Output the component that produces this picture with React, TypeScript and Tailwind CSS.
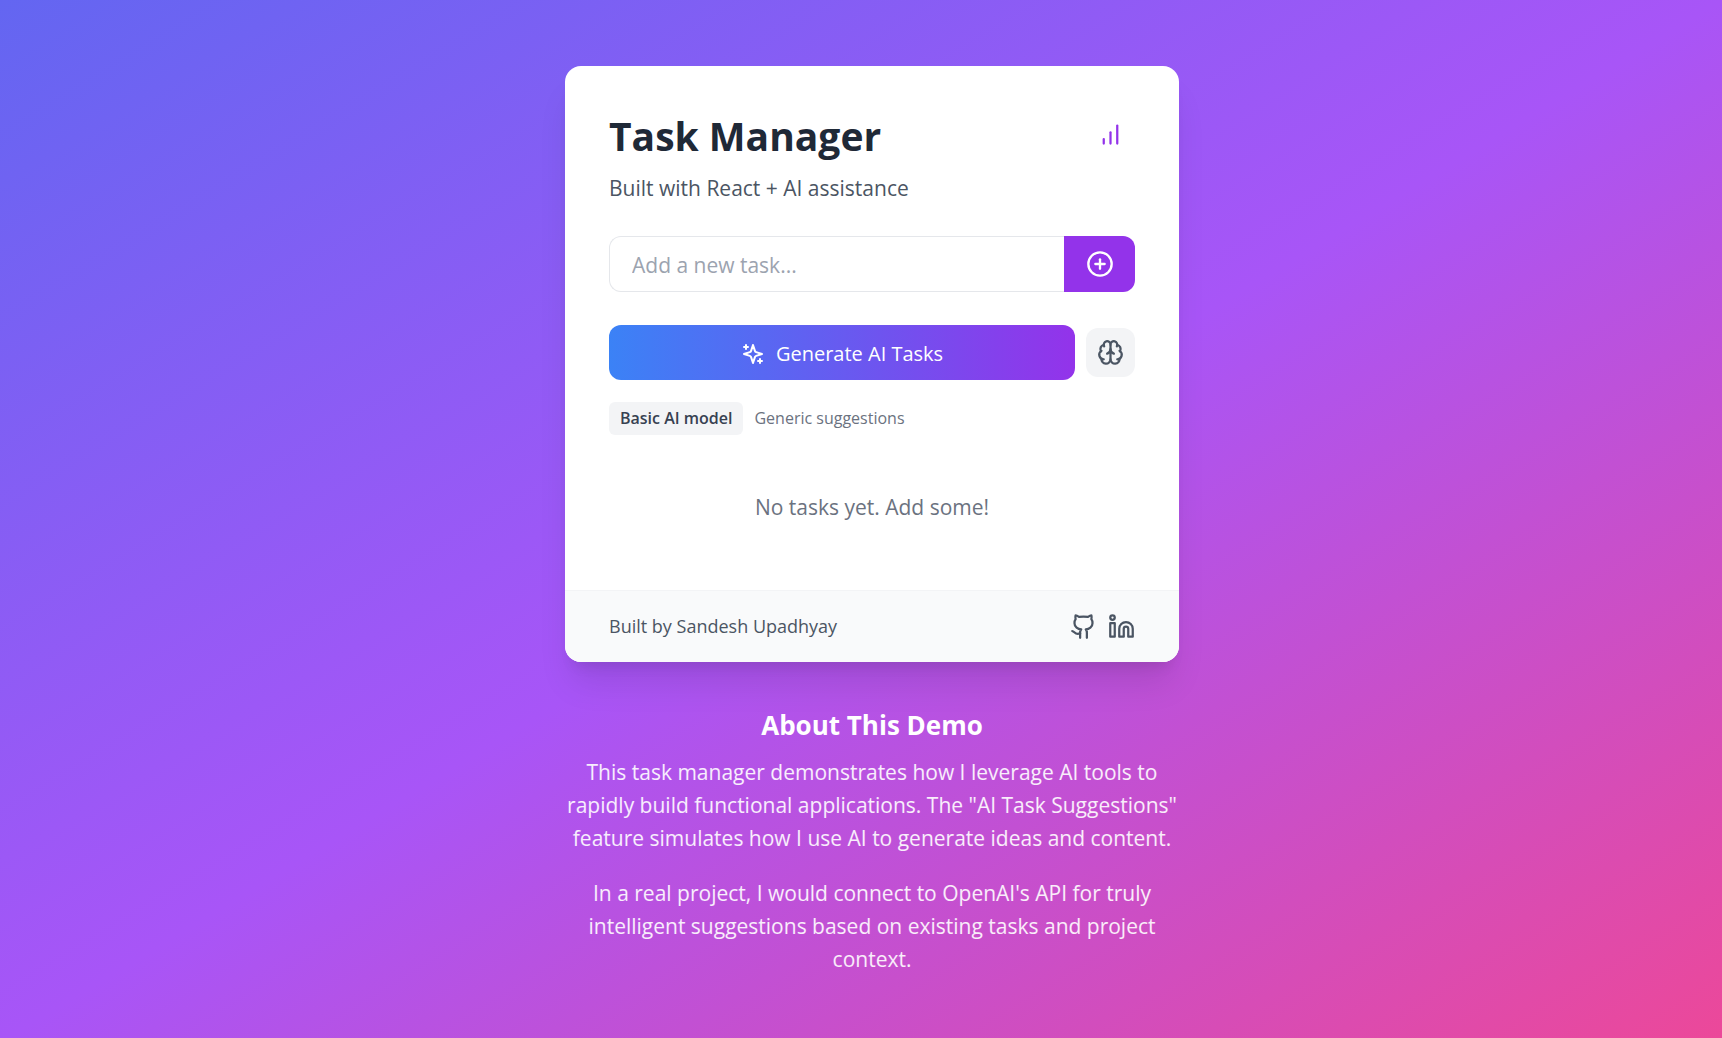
import React, { useState } from "react";
import { Brain, CirclePlus, Github, Linkedin } from "lucide-react";

const strokeProps = {
  viewBox: "0 0 24 24",
  fill: "none",
  stroke: "currentColor",
  strokeWidth: 2,
  strokeLinecap: "round",
  strokeLinejoin: "round",
  "aria-hidden": true,
} as const;

function SparklesIcon() {
  return (
    <svg {...strokeProps} className="size-6">
      <path d="m12 3-1.912 5.813a2 2 0 0 1-1.275 1.275L3 12l5.813 1.912a2 2 0 0 1 1.275 1.275L12 21l1.912-5.813a2 2 0 0 1 1.275-1.275L21 12l-5.813-1.912a2 2 0 0 1-1.275-1.275L12 3Z" />
      <path d="M5 3v4" />
      <path d="M19 17v4" />
      <path d="M3 5h4" />
      <path d="M17 19h4" />
    </svg>
  );
}

function BarsIcon() {
  return (
    <svg {...strokeProps} className="size-[27px]">
      <path d="M12 20V10" />
      <path d="M18 20V4" />
      <path d="M6 20v-4" />
    </svg>
  );
}

export default function App() {
  const [draft, setDraft] = useState("");

  return (
    <div className="min-h-screen bg-[linear-gradient(to_bottom_right,#6366f1,#a855f7,#ec4899)] py-[66px] pr-[22px] pl-11 font-['Open_Sans',sans-serif] text-[21px] leading-[33px]">
      <main className="mx-auto max-w-[614px] overflow-hidden rounded-2xl bg-white shadow-[0_27px_34px_-7px_rgba(0,0,0,0.1),0_11px_14px_-8px_rgba(0,0,0,0.1)]">
        <div className="p-11">
          <header className="mb-[31px] flex items-start justify-between">
            <div>
              <h1 className="mb-[11px] text-[39px] leading-[51px] font-bold text-[#1f2937]">Task Manager</h1>
              <p className="text-[#4b5563]">Built with React + AI assistance</p>
            </div>
            <button type="button" aria-label="Show statistics" className="rounded-full p-[11px] text-[#9333ea]">
              <BarsIcon />
            </button>
          </header>

          <form className="mb-[33px] flex" onSubmit={(e) => e.preventDefault()}>
            <input
              type="text"
              aria-label="New task"
              placeholder="Add a new task..."
              value={draft}
              onChange={(e) => setDraft(e.target.value)}
              className="h-14 min-w-0 flex-1 rounded-l-xl border border-r-0 border-[#e5e7eb] px-[22px] pt-0.5 text-[#1f2937] placeholder:text-[#9ca3af]"
            />
            <button
              type="submit"
              aria-label="Add task"
              className="flex w-[71px] items-center justify-center rounded-r-xl bg-[#9333ea] text-white"
            >
              <CirclePlus className="size-7" />
            </button>
          </form>

          <div className="mb-[22px] flex items-center gap-[11px]">
            <button
              type="button"
              className="flex h-[55px] flex-1 items-center justify-center gap-[11px] rounded-xl bg-[linear-gradient(to_right,#3b82f6,#9333ea)] pt-0.5 text-xl text-white"
            >
              <SparklesIcon />
              Generate AI Tasks
            </button>
            <button
              type="button"
              aria-label="Switch AI model"
              className="rounded-xl bg-[#f3f4f6] p-[11px] text-[#4b5563]"
            >
              <Brain className="size-[27px]" />
            </button>
          </div>

          <div className="flex items-center gap-[11px] text-base leading-[33px]">
            <span className="rounded-md bg-[#f3f4f6] px-[11px] font-semibold text-[#374151]">Basic AI model</span>
            <span className="text-[#6b7280]">Generic suggestions</span>
          </div>

          <p className="pt-14 pb-[22px] text-center text-[#6b7280]">No tasks yet. Add some!</p>
        </div>

        <footer className="flex items-center justify-between border-t border-[#f3f4f6] bg-[#f9fafb] px-11 py-[22px]">
          <p className="text-lg leading-[27px] text-[#4b5563]">Built by Sandesh Upadhyay</p>
          <div className="flex gap-[11px] text-[#4b5563]">
            <a href="#github" aria-label="GitHub">
              <Github className="size-[27px]" />
            </a>
            <a href="#linkedin" aria-label="LinkedIn">
              <Linkedin className="size-[27px]" />
            </a>
          </div>
        </footer>
      </main>

      <section className="mx-auto mt-11 max-w-[614px] text-center text-white">
        <h2 className="mb-[11px] text-[26px] leading-[39px] font-bold">About This Demo</h2>
        <p className="mb-[22px] text-white/90">
          This task manager demonstrates how I leverage AI tools to rapidly build functional applications. The "AI Task
          Suggestions" feature simulates how I use AI to generate ideas and content.
        </p>
        <p className="text-white/90">
          In a real project, I would connect to OpenAI's API for truly intelligent suggestions based on existing tasks
          and project context.
        </p>
      </section>
    </div>
  );
}
